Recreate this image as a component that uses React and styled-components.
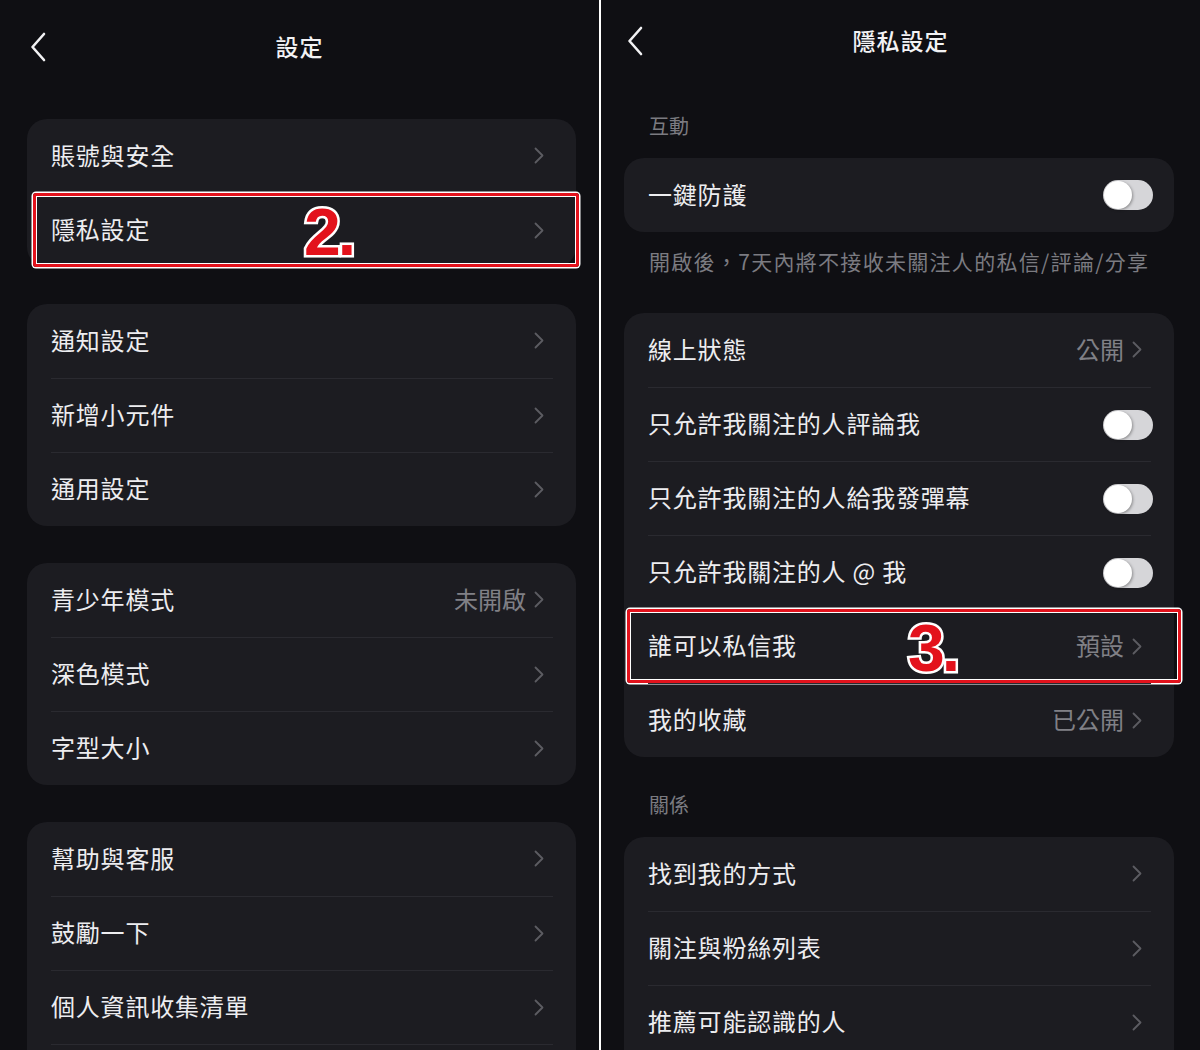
import React from 'react';
import styled, { createGlobalStyle } from 'styled-components';

const GlobalStyle = createGlobalStyle`
  html, body {
    margin: 0;
    padding: 0;
    background: #ffffff;
  }
  body {
    font-family: "Noto Sans CJK TC", "Noto Sans", sans-serif;
  }
`;

const Screen = styled.div`
  display: flex;
  gap: 2px;
  width: 1200px;
  height: 1050px;
  background: #ffffff;
  overflow: hidden;
`;

const Panel = styled.div`
  width: 599px;
  height: 1050px;
  background: #0f0f13;
  overflow: hidden;
  display: flex;
  flex-direction: column;
`;

const Header = styled.div`
  position: relative;
  height: ${p => p.$h}px;
  flex-shrink: 0;
  display: flex;
  align-items: center;
  justify-content: center;
  padding-bottom: 3px;
  box-sizing: border-box;
`;

const Back = styled.div`
  position: absolute;
  left: ${p => p.$left}px;
  top: 50%;
  transform: translateY(-50%);
  display: flex;
`;

const Title = styled.div`
  color: #f2f2f4;
  font-size: 23px;
  font-weight: 500;
  letter-spacing: 1px;
`;

const Content = styled.div`
  display: flex;
  flex-direction: column;
  padding: ${p => p.$pad};
  gap: ${p => p.$gap || 0}px;
`;

const Card = styled.div`
  background: #1c1c21;
  border-radius: 20px;
  margin-top: ${p => p.$mt || 0}px;
`;

const Row = styled.div`
  position: relative;
  height: 74px;
  margin: 0 23px 0 24px;
  padding-bottom: 4px;
  display: flex;
  align-items: center;
  justify-content: space-between;
  border-top: ${p => (p.$first ? 'none' : '1px solid #2a2a30')};
  box-sizing: border-box;
`;

const Tail = styled.div`
  height: 40px;
  margin: 0 23px 0 24px;
  border-top: 1px solid #2a2a30;
`;

const Label = styled.span`
  color: #ededf0;
  font-size: 24px;
  letter-spacing: 0.8px;
`;

const Trail = styled.div`
  display: flex;
  align-items: center;
  gap: 8px;
  padding-right: 9px;
  padding-top: 3px;
`;

const Value = styled.span`
  color: #808086;
  font-size: 24px;
  margin-top: -3px;
`;

const Toggle = styled.div`
  position: relative;
  width: 50px;
  height: 30px;
  border-radius: 15px;
  background: #d6d6d9;
  margin-right: -2px;
  margin-top: 4px;
  &::after {
    content: '';
    position: absolute;
    left: 1px;
    top: 1px;
    width: 28px;
    height: 28px;
    border-radius: 50%;
    background: #ffffff;
    box-shadow: 1px 1px 3px rgba(0, 0, 0, 0.35);
  }
`;

const Section = styled.div`
  color: #7b7b81;
  font-size: 20px;
  line-height: 24px;
  padding-left: 25px;
  margin-top: ${p => p.$mt}px;
`;

const Note = styled.div`
  color: #7b7b81;
  font-size: 21px;
  line-height: 24px;
  padding-left: 25px;
  margin-top: 17px;
  letter-spacing: 1.3px;
  white-space: nowrap;
`;

const Highlight = styled.div`
  position: absolute;
  left: ${p => p.$left}px;
  right: ${p => p.$right}px;
  top: -1px;
  bottom: 0;
  border: 3px solid #e3121c;
  border-radius: 3px;
  box-shadow: 0 0 0 1.5px #ffffff, inset 0 0 0 1px #ffffff;
  pointer-events: none;
`;

const Step = styled.span`
  position: absolute;
  left: ${p => p.$left}px;
  top: 50%;
  transform: translateY(-48%);
  font-family: "Liberation Sans", Arial, sans-serif;
  font-weight: 700;
  font-size: 66px;
  line-height: 1;
  color: #e3121c;
  -webkit-text-stroke: 5px #ffffff;
  paint-order: stroke fill;
  letter-spacing: -3px;
`;

const Chevron = ({ color = '#5c5c62', w = 10, h = 17, sw = 1.8 }) => (
  <svg width={w} height={h} viewBox={`0 0 ${w} ${h}`} fill="none">
    <path d={`M1.5 1.5 L${w - 1.5} ${h / 2} L1.5 ${h - 1.5}`} stroke={color} strokeWidth={sw} strokeLinecap="round" strokeLinejoin="round" />
  </svg>
);

const BackIcon = () => (
  <svg width="16" height="30" viewBox="0 0 16 30" fill="none">
    <path d="M14 2 L2.5 15 L14 28" stroke="#f2f2f4" strokeWidth="2.6" strokeLinecap="round" strokeLinejoin="round" />
  </svg>
);

const SettingRow = ({ item, first }) => (
  <Row $first={first}>
    <Label>{item.label}</Label>
    {item.toggle ? (
      <Toggle />
    ) : (
      <Trail>
        {item.value && <Value>{item.value}</Value>}
        <Chevron />
      </Trail>
    )}
    {item.step && (
      <>
        <Highlight $left={item.box[0]} $right={item.box[1]} />
        <Step $left={item.stepLeft}>{item.step}</Step>
      </>
    )}
  </Row>
);

const SettingCard = ({ items, mt, open }) => (
  <Card $mt={mt}>
    {items.map((it, i) => (
      <SettingRow key={it.label} item={it} first={i === 0} />
    ))}
    {open && <Tail />}
  </Card>
);

const leftGroups = [
  [
    { label: '賬號與安全' },
    { label: '隱私設定', step: '2.', stepLeft: 253, box: [-18, -26] },
  ],
  [{ label: '通知設定' }, { label: '新增小元件' }, { label: '通用設定' }],
  [{ label: '青少年模式', value: '未開啟' }, { label: '深色模式' }, { label: '字型大小' }],
  [{ label: '幫助與客服' }, { label: '鼓勵一下' }, { label: '個人資訊收集清單' }],
];

const interactGroup = [
  { label: '線上狀態', value: '公開' },
  { label: '只允許我關注的人評論我', toggle: true },
  { label: '只允許我關注的人給我發彈幕', toggle: true },
  { label: '只允許我關注的人 @ 我', toggle: true },
  { label: '誰可以私信我', value: '預設', step: '3.', stepLeft: 260, box: [-21, -30] },
  { label: '我的收藏', value: '已公開' },
];

const relationGroup = [
  { label: '找到我的方式' },
  { label: '關注與粉絲列表' },
  { label: '推薦可能認識的人' },
];

export default function App() {
  return (
    <>
      <GlobalStyle />
      <Screen>
        <Panel>
          <Header $h={94}>
            <Back $left={30}>
              <BackIcon />
            </Back>
            <Title>設定</Title>
          </Header>
          <Content $pad="25px 23px 0 27px" $gap={37}>
            {leftGroups.map((g, i) => (
              <SettingCard key={i} items={g} open={i === leftGroups.length - 1} />
            ))}
          </Content>
        </Panel>
        <Panel>
          <Header $h={82}>
            <Back $left={26}>
              <BackIcon />
            </Back>
            <Title>隱私設定</Title>
          </Header>
          <Content $pad="0 26px 0 23px">
            <Section $mt={32}>互動</Section>
            <SettingCard mt={20} items={[{ label: '一鍵防護', toggle: true }]} />
            <Note>開啟後，7天內將不接收未關注人的私信/評論/分享</Note>
            <SettingCard mt={40} items={interactGroup} />
            <Section $mt={36}>關係</Section>
            <SettingCard mt={20} items={relationGroup} open />
          </Content>
        </Panel>
      </Screen>
    </>
  );
}
